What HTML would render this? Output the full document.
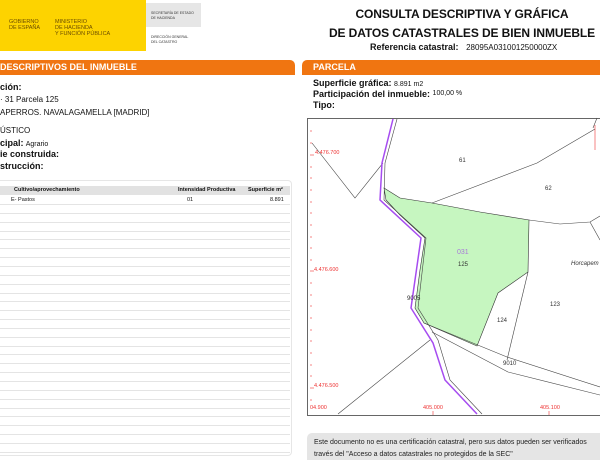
<!DOCTYPE html>
<html><head><meta charset="utf-8"><style>
*{margin:0;padding:0;box-sizing:border-box}
body{width:600px;height:460px;overflow:hidden;background:#fff;font-family:"Liberation Sans",sans-serif;position:relative;color:#111}
.a{position:absolute;white-space:nowrap}
.b{font-weight:bold}
.bar{position:absolute;background:#f07511;height:15px;top:60px;color:#fff;font-weight:bold;font-size:9px;line-height:15px}
.row{position:absolute;left:0;width:290px;height:1px;background:#e4e4e4}
</style></head><body>
<div class="a" style="left:0;top:0;width:146px;height:51px;background:#fdd300"></div>
<div class="a" style="left:9px;top:19px;font-size:5.5px;line-height:6px;color:#6b4d00">GOBIERNO<br>DE ESPAÑA</div>
<div class="a" style="left:55px;top:19px;font-size:5.5px;line-height:6px;color:#6b4d00">MINISTERIO<br>DE HACIENDA<br>Y FUNCIÓN PÚBLICA</div>
<div class="a" style="left:146px;top:3px;width:55px;height:24px;background:#e6e6e6"></div>
<div class="a" style="left:151px;top:11px;font-size:3.5px;line-height:4.5px;color:#333">SECRETARÍA DE ESTADO<br>DE HACIENDA</div>
<div class="a" style="left:151px;top:35px;font-size:3.5px;line-height:4.5px;color:#333">DIRECCIÓN GENERAL<br>DEL CATASTRO</div>
<div class="a b" style="left:300px;width:300px;top:5px;text-align:center;font-size:12px;line-height:19px;padding-left:24px;letter-spacing:-0.1px">CONSULTA DESCRIPTIVA Y GRÁFICA<br>DE DATOS CATASTRALES DE BIEN INMUEBLE</div>
<div class="a" style="left:370px;top:42px;font-size:9px"><b>Referencia catastral:</b>&nbsp;&nbsp;&nbsp;<span style="font-size:8px">28095A031001250000ZX</span></div>

<div class="bar" style="left:0;width:295px;border-radius:0 5px 0 0">DESCRIPTIVOS DEL INMUEBLE</div>
<div class="bar" style="left:302px;width:298px;border-radius:5px 0 0 0;padding-left:11px">PARCELA</div>

<div class="a b" style="left:0;top:82px;font-size:9px">ción:</div>
<div class="a" style="left:0;top:95px;font-size:8px">· 31 Parcela 125</div>
<div class="a" style="left:0;top:108px;font-size:8px">APERROS. NAVALAGAMELLA [MADRID]</div>
<div class="a" style="left:0;top:126px;font-size:8px">ÚSTICO</div>
<div class="a" style="left:0;top:138px;font-size:8px"><b style="font-size:9px">cipal:</b> <span style="font-size:7px">Agrario</span></div>
<div class="a b" style="left:0;top:149px;font-size:9px">ie construida:</div>
<div class="a b" style="left:0;top:161px;font-size:9px">strucción:</div>

<div class="a" style="left:0;top:180px;width:292px;height:276px;border:1px solid #e6e6e6;border-left:none;border-radius:0 4px 4px 0"></div>
<div class="a" style="left:0;top:186px;width:290px;height:9px;background:#e2e2e2"></div>
<div class="a b" style="left:14px;top:186px;font-size:5.5px;line-height:9px">Cultivo/aprovechamiento</div>
<div class="a b" style="left:178px;top:186px;font-size:5.5px;line-height:9px">Intensidad Productiva</div>
<div class="a b" style="left:248px;top:186px;font-size:5.5px;line-height:9px">Superficie m²</div>
<div class="a" style="left:11px;top:196px;font-size:5.5px;line-height:8px">E- Pastos</div>
<div class="a" style="left:187px;top:196px;font-size:5.5px;line-height:8px">01</div>
<div class="a" style="left:270px;top:196px;font-size:5.5px;line-height:8px">8.891</div>
<div id="rows"></div>

<div class="a" style="left:313px;top:78px;font-size:9px"><b>Superficie gráfica:</b> <span style="font-size:7px">8.891 m2</span></div>
<div class="a" style="left:313px;top:89px;font-size:9px"><b>Participación del inmueble:</b> <span style="font-size:7px;vertical-align:2px">100,00 %</span></div>
<div class="a b" style="left:313px;top:100px;font-size:9px">Tipo:</div>

<svg class="a" style="left:0;top:0" width="600" height="460" viewBox="0 0 600 460">
<rect x="307.5" y="118.5" width="300" height="297" fill="#fff" stroke="#666" stroke-width="1"/>
<polygon points="384,188 400,198 432,203 480,212 529,220 528,272 498,293 477,346 424,323 415,308 420,270 425,238 400,215 386,200" fill="#c6f6c0" stroke="#333" stroke-width="0.6"/>
<g fill="none" stroke="#444" stroke-width="0.6">
<polyline points="312,143 355,198 383,163"/>
<polyline points="432,203 537,163 595,129"/>
<polyline points="529,220 560,224 590,222 600,216"/>
<polyline points="590,222 600,240"/>
<polyline points="528,272 507,360"/>
<polyline points="424,323 507,357 600,387"/>
<polyline points="432,332 508,372 600,395"/>
<polyline points="430,340 338,414"/>
<polyline points="397,119 385,163 384,200 426,238 418,308 438,340 450,380 482,414"/>
<polyline points="597,118 593,128"/>
</g>
<polyline points="393,119 382,163 380,200 421,238 411,308 433,343 445,380 477,414" fill="none" stroke="#a64cf0" stroke-width="1.5"/>
<g stroke="#e33" stroke-width="0.6">
<line x1="310" y1="131" x2="312" y2="131"/><line x1="310" y1="143" x2="312" y2="143"/><line x1="310" y1="155" x2="314" y2="155"/><line x1="310" y1="167" x2="312" y2="167"/><line x1="310" y1="178" x2="312" y2="178"/><line x1="310" y1="190" x2="312" y2="190"/><line x1="310" y1="202" x2="312" y2="202"/><line x1="310" y1="213" x2="312" y2="213"/><line x1="310" y1="225" x2="312" y2="225"/><line x1="310" y1="237" x2="312" y2="237"/><line x1="310" y1="248" x2="312" y2="248"/><line x1="310" y1="260" x2="312" y2="260"/><line x1="310" y1="271" x2="314" y2="271"/><line x1="310" y1="283" x2="312" y2="283"/><line x1="310" y1="295" x2="312" y2="295"/><line x1="310" y1="306" x2="312" y2="306"/><line x1="310" y1="318" x2="312" y2="318"/><line x1="310" y1="330" x2="312" y2="330"/><line x1="310" y1="341" x2="312" y2="341"/><line x1="310" y1="353" x2="312" y2="353"/><line x1="310" y1="365" x2="312" y2="365"/><line x1="310" y1="376" x2="312" y2="376"/><line x1="310" y1="388" x2="314" y2="388"/><line x1="310" y1="400" x2="312" y2="400"/>
<line x1="433" y1="411" x2="433" y2="415"/><line x1="549" y1="411" x2="549" y2="415"/>
<line x1="595" y1="125" x2="595" y2="150"/>
</g>
<g font-family="Liberation Sans" font-size="5.5" fill="#e33">
<text x="315" y="154">4.476.700</text><text x="314" y="271">4.476.600</text><text x="314" y="387">4.476.500</text>
<text x="310" y="409">04.900</text><text x="423" y="409">405.000</text><text x="540" y="409">405.100</text>
</g>
<g font-family="Liberation Sans" font-size="6" fill="#333">
<text x="459" y="162">61</text><text x="545" y="190">62</text><text x="458" y="266">125</text>
<text x="550" y="306">123</text><text x="497" y="322">124</text><text x="407" y="300">9005</text><text x="503" y="365">9010</text>
<text x="571" y="265" font-style="italic">Horcapem</text>
<text x="457" y="254" fill="#a87ad8" font-size="7">031</text>
</g>
</svg>

<div class="a" style="left:307px;top:433px;width:293px;height:27px;background:#e5e5e5;border-radius:5px 0 0 0;overflow:hidden">
<div class="a" style="left:7px;top:4px;font-size:7px;line-height:12px;color:#222">Este documento no es una certificación catastral, pero sus datos pueden ser verificados<br>través del "Acceso a datos catastrales no protegidos de la SEC"</div>
</div>
<script>
var r=document.getElementById('rows'),h='';for(var y=204;y<454;y+=8.85){h+='<div class="row" style="top:'+Math.round(y)+'px"></div>'}r.innerHTML=h;
</script>
</body></html>
